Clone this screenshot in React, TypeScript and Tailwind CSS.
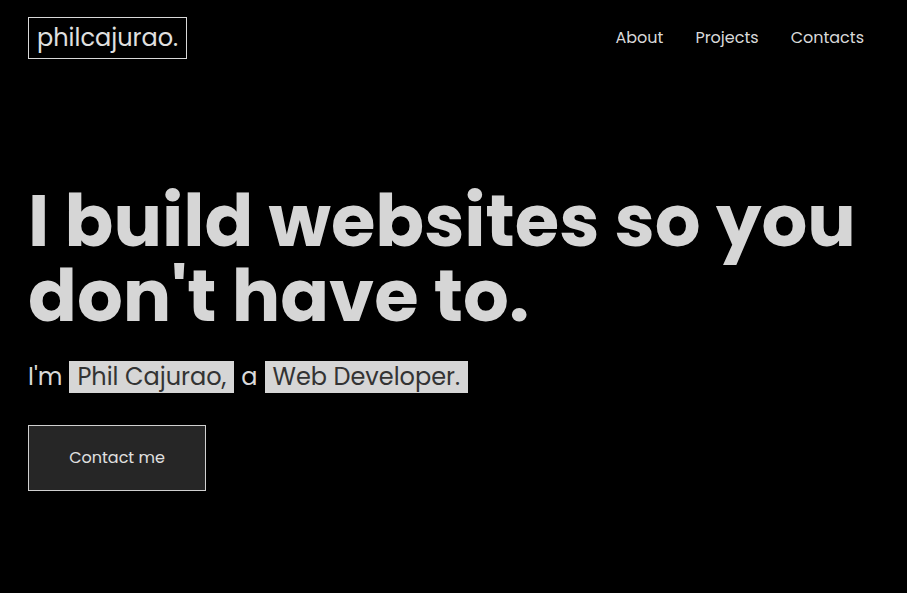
export default function App() {
  const font = { fontFamily: "Poppins, 'DejaVu Sans', sans-serif" };
  return (
    <div className="min-h-[593px] w-full bg-black text-[#d9d9d9]" style={font}>
      {/* Header */}
      <header className="flex items-center justify-between pl-[28px] pr-[43px] pt-[17px]">
        <a className="border border-[#d9d9d9] px-[8px] h-[42px] flex items-center text-[24px] text-[#e0e0e0]">
          philcajurao.
        </a>
        <nav className="flex items-center gap-[32px] text-[16px] text-[#d9d9d9]">
          <a>About</a>
          <a>Projects</a>
          <a>Contacts</a>
        </nav>
      </header>

      {/* Hero */}
      <main className="pl-[28px] pt-[124px]">
        <h1 className="text-[72px] leading-[75px] font-bold text-[#d6d6d6]">
          I build websites so you
          <br />
          don't have to.
        </h1>
        <p className="mt-[26px] flex items-center text-[24px] text-[#d9d9d9]">
          <span>I'm</span>
          <span className="ml-[7px] bg-[#d6d6d6] text-[#333] px-[8px] h-[32px] flex items-center">
            Phil Cajurao,
          </span>
          <span className="mx-[7px]">a</span>
          <span className="bg-[#d6d6d6] text-[#333] px-[8px] h-[32px] flex items-center">
            Web Developer.
          </span>
        </p>
        <button className="mt-[30px] w-[178px] h-[66px] bg-[#262626] border border-[#d0d0d0] text-[16px] text-[#e0e0e0]">
          Contact me
        </button>
      </main>
    </div>
  );
}
